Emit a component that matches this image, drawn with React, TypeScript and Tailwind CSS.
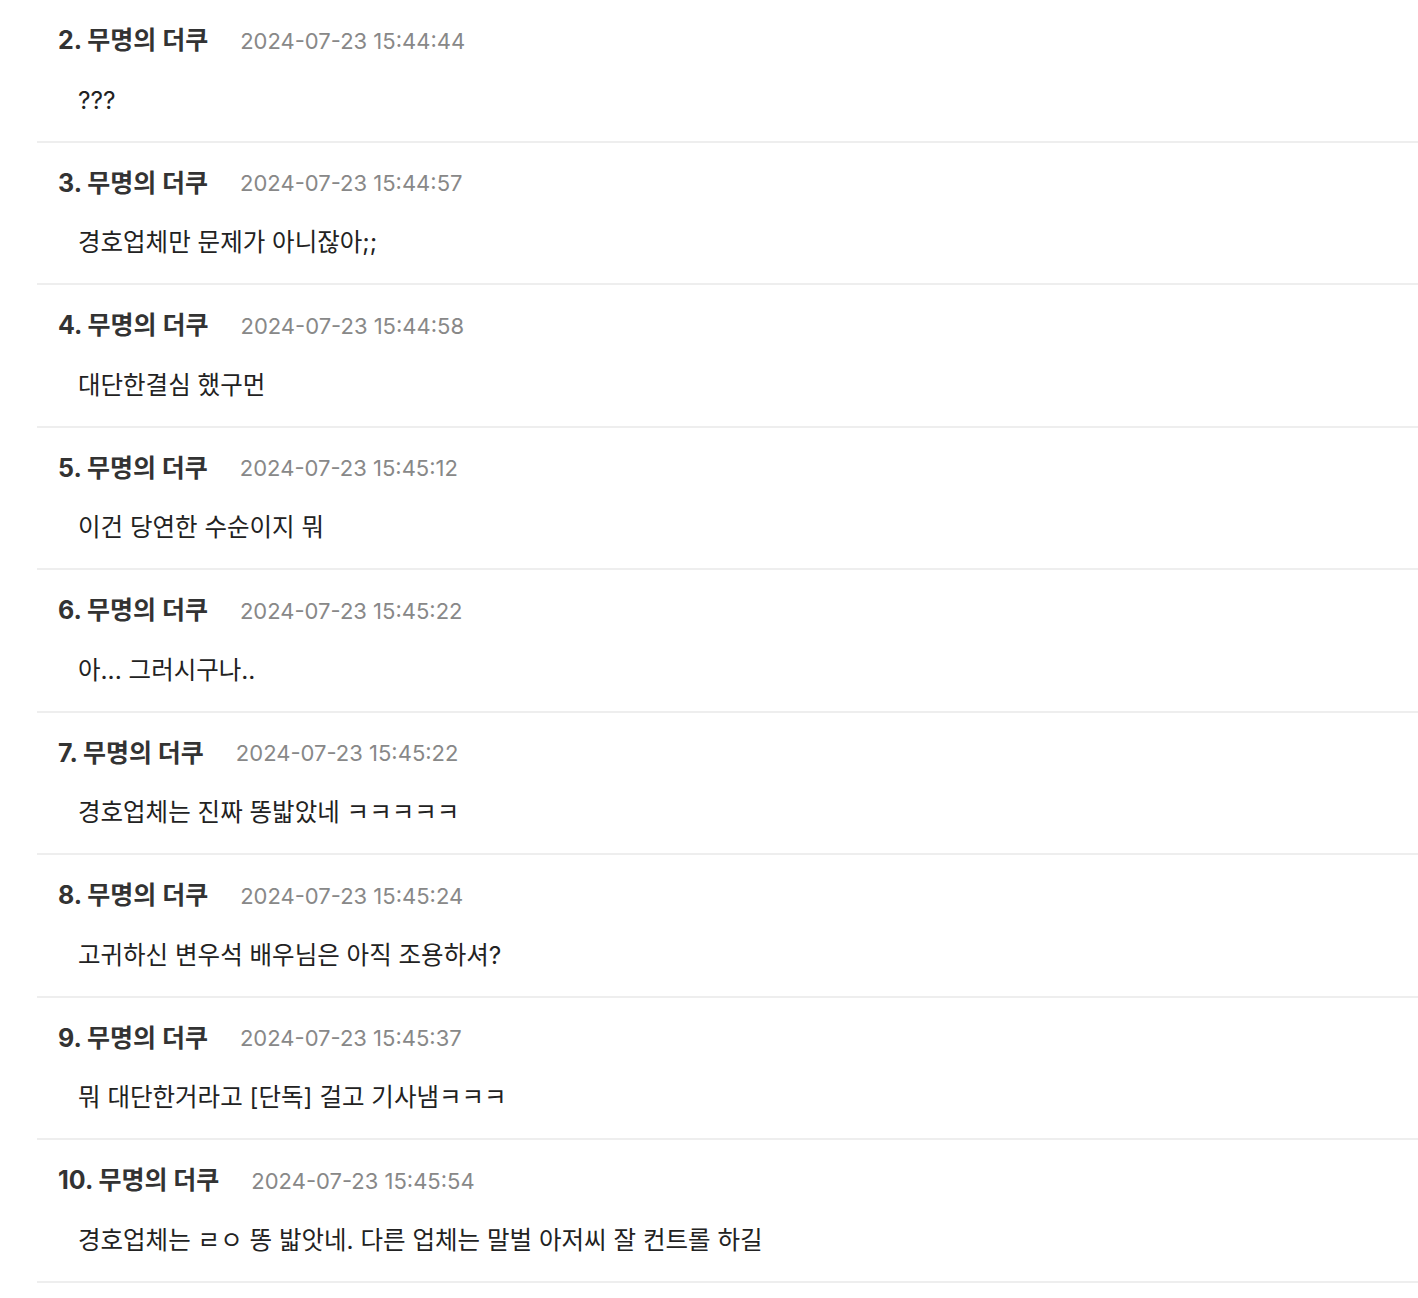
const comments = [
  { no: 2, date: "2024-07-23 15:44:44", text: "???" },
  { no: 3, date: "2024-07-23 15:44:57", text: "경호업체만 문제가 아니잖아;;" },
  { no: 4, date: "2024-07-23 15:44:58", text: "대단한결심 했구먼" },
  { no: 5, date: "2024-07-23 15:45:12", text: "이건 당연한 수순이지 뭐" },
  { no: 6, date: "2024-07-23 15:45:22", text: "아... 그러시구나.." },
  { no: 7, date: "2024-07-23 15:45:22", text: "경호업체는 진짜 똥밟았네 ㅋㅋㅋㅋㅋ" },
  { no: 8, date: "2024-07-23 15:45:24", text: "고귀하신 변우석 배우님은 아직 조용하셔?" },
  { no: 9, date: "2024-07-23 15:45:37", text: "뭐 대단한거라고 [단독] 걸고 기사냄ㅋㅋㅋ" },
  { no: 10, date: "2024-07-23 15:45:54", text: "경호업체는 ㄹㅇ 똥 밟앗네. 다른 업체는 말벌 아저씨 잘 컨트롤 하길" },
];

function CommentRow({ no, date, text }: { no: number; date: string; text: string }) {
  return (
    <li className="flex flex-col border-b-2 border-[#eeeeee] pl-[21px] pt-[24px] pb-[23.5px]">
      <div className="flex h-[34px] items-center gap-[32px]">
        <span className="text-[25px] font-bold text-[#333333]">{no}. 무명의 더쿠</span>
        <span className="text-[22px] text-[#888888]">{date}</span>
      </div>
      <p className="mt-[25px] flex h-[34px] items-center pl-[20px] text-[24.5px] text-[#222222]">{text}</p>
    </li>
  );
}

export default function App() {
  return (
    <div
      className="min-h-screen bg-white pl-[37px]"
      style={{ fontFamily: 'Inter, "Noto Sans CJK KR", sans-serif' }}
    >
      <ul>
        {comments.map((c) => (
          <CommentRow key={c.no} {...c} />
        ))}
      </ul>
    </div>
  );
}
